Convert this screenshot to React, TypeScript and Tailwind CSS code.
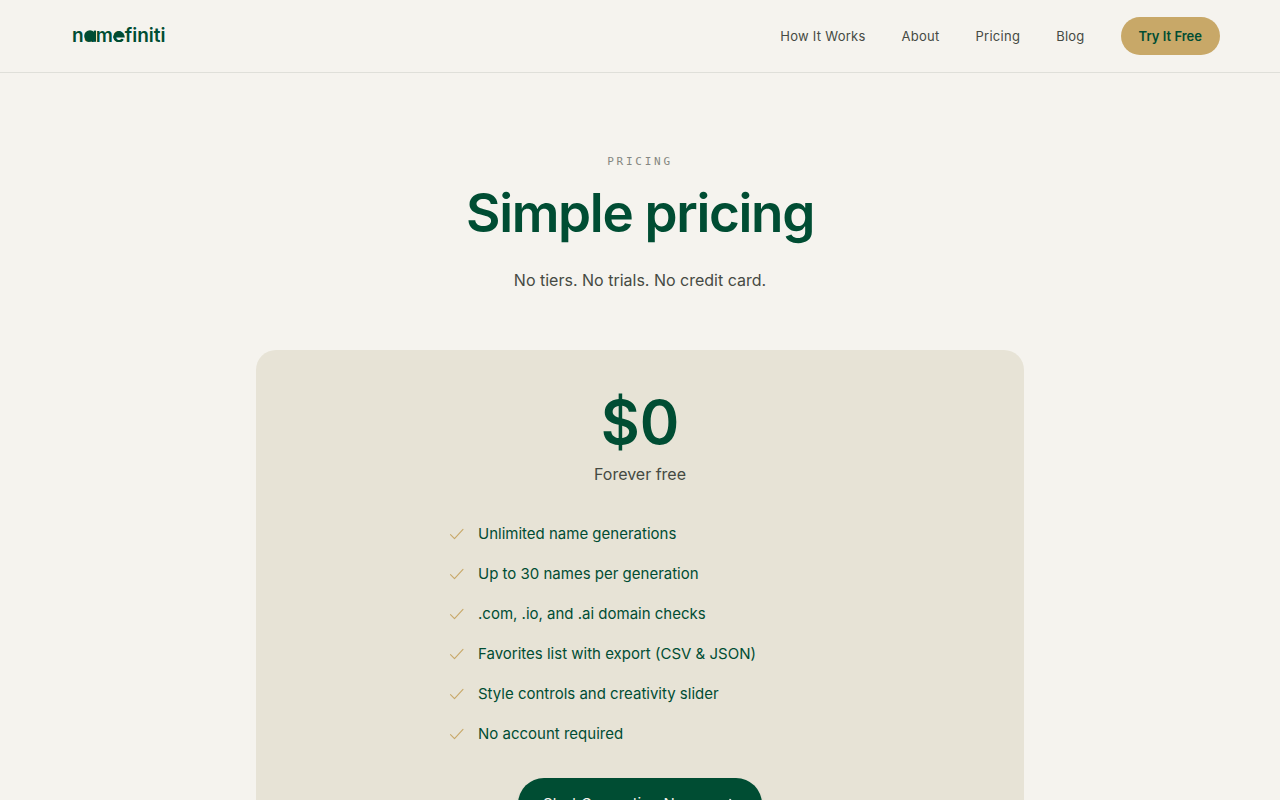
interface NavLink {
  label: string;
  href: string;
}

const navLinks: NavLink[] = [
  { label: "How It Works", href: "#how-it-works" },
  { label: "About", href: "#about" },
  { label: "Pricing", href: "#pricing" },
  { label: "Blog", href: "#blog" },
];

const features = [
  "Unlimited name generations",
  "Up to 30 names per generation",
  ".com, .io, and .ai domain checks",
  "Favorites list with export (CSV & JSON)",
  "Style controls and creativity slider",
  "No account required",
];

function CheckIcon() {
  return (
    <svg
      viewBox="0 0 18 18"
      className="size-[18px] shrink-0 text-[#c8a868]"
      fill="none"
      stroke="currentColor"
      strokeWidth="1.1"
      strokeLinecap="round"
      strokeLinejoin="round"
      aria-hidden="true"
    >
      <path d="M2.5 9.6 6.5 13.6 15 4.4" />
    </svg>
  );
}

function ArrowIcon() {
  return (
    <svg
      viewBox="0 0 16 16"
      className="size-4"
      fill="none"
      stroke="currentColor"
      strokeWidth="1.5"
      strokeLinecap="round"
      strokeLinejoin="round"
      aria-hidden="true"
    >
      <path d="M2.5 8h11M9 3.5 13.5 8 9 12.5" />
    </svg>
  );
}

// Wordmark with the bowls of "a" and "e" filled in
function Logo() {
  return (
    <a
      href="#home"
      aria-label="namefiniti"
      className="flex px-3 text-[19px] leading-6 font-semibold text-[#004d33]"
    >
      <span>n</span>
      <span className="relative w-3 text-center">
        a
        <svg
          viewBox="0 0 12 12"
          className="absolute bottom-[6px] left-0 size-3"
          aria-hidden="true"
        >
          <circle cx="6" cy="6" r="5.8" fill="currentColor" />
          <path d="M9.8 .6H12v11.2H9.8z" fill="currentColor" />
        </svg>
      </span>
      <span>m</span>
      <span className="relative w-3 text-center">
        e
        <svg
          viewBox="0 0 12 12"
          className="absolute bottom-[6px] left-0 size-3"
          aria-hidden="true"
        >
          <path d="M.2 7.4a5.8 5.8 0 1 1 11.6 0z" fill="currentColor" />
          <path
            d="M1.2 6.5a4.8 4.8 0 0 0 8.6 2.8"
            fill="none"
            stroke="currentColor"
            strokeWidth="2"
          />
        </svg>
      </span>
      <span>finiti</span>
    </a>
  );
}

function Header() {
  return (
    <header className="border-b border-[#dfdfd9]">
      <div className="mx-auto flex h-[72px] max-w-[1160px] items-center justify-between">
        <Logo />
        <nav className="flex items-center gap-9">
          {navLinks.map((link) => (
            <a
              key={link.label}
              href={link.href}
              className="text-[13px] leading-5 tracking-[0.02em] text-[#454a43]"
            >
              {link.label}
            </a>
          ))}
          <button
            type="button"
            className="h-[38px] rounded-full bg-[#c8a868] px-[18px] text-[13px] leading-5 font-semibold text-[#004d33]"
          >
            Try It Free
          </button>
        </nav>
      </div>
    </header>
  );
}

function PricingCard() {
  return (
    <section className="mt-14 flex w-full max-w-3xl flex-col items-center rounded-[20px] bg-[#e7e3d6] px-12 pt-10 pb-12">
      <p className="text-[60px] leading-16 font-semibold text-[#004d33]">$0</p>
      <p className="mt-2 text-[16px] leading-6 text-[#454a43]">Forever free</p>

      <ul className="mt-9 flex w-full max-w-sm flex-col gap-4">
        {features.map((feature) => (
          <li
            key={feature}
            className="flex items-center gap-3 text-[15px] leading-6 text-[#004d33]"
          >
            <CheckIcon />
            {feature}
          </li>
        ))}
      </ul>

      <button
        type="button"
        className="mt-8 flex h-[52px] items-center gap-2 rounded-full bg-[#004d33] px-[25px] text-[15px] leading-6 text-[#f5f3ee] shadow-md"
      >
        Start Generating Names
        <ArrowIcon />
      </button>
    </section>
  );
}

export default function App() {
  return (
    <div className="min-h-screen bg-[#f5f3ee] font-['Inter',sans-serif]">
      <Header />
      <main className="flex flex-col items-center px-6 py-20">
        <p className="font-['DejaVu_Sans_Mono',monospace] text-[11px] leading-[18px] tracking-[0.25em] text-[#858781] uppercase">
          Pricing
        </p>
        <h1 className="mt-3 text-[53px] leading-[60px] font-semibold tracking-tight text-[#004d33]">
          Simple pricing
        </h1>
        <p className="mt-[23px] text-[16px] leading-7 text-[#454a43]">
          No tiers. No trials. No credit card.
        </p>
        <PricingCard />
      </main>
    </div>
  );
}
